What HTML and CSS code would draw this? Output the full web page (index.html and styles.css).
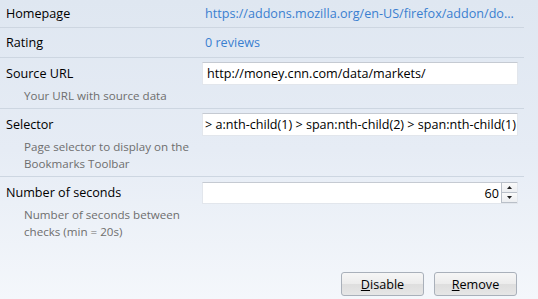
FILE: index.html
```html
<!DOCTYPE html>
<html lang="en">
<head>
  <meta charset="UTF-8">
  <title>Add-on preferences</title>
  <link rel="stylesheet" href="styles.css">
</head>
<body>

<div id="prefs">
  <div class="row row-info first">
    <div class="label">Homepage</div>
    <div class="value"><a class="link" href="#">https://addons.mozilla.org/en-US/firefox/addon/do...</a></div>
  </div>

  <div class="row row-info second">
    <div class="label">Rating</div>
    <div class="value"><a class="link" href="#">0 reviews</a></div>
  </div>

  <div class="row setting">
    <div class="label-box">
      <div class="label">Source URL</div>
      <div class="desc">Your URL with source data</div>
    </div>
    <div class="field"><div class="textbox"><span>http://money.cnn.com/data/markets/</span></div></div>
  </div>

  <div class="row setting">
    <div class="label-box">
      <div class="label">Selector</div>
      <div class="desc">Page selector to display on the<br>Bookmarks Toolbar</div>
    </div>
    <div class="field"><div class="textbox scrolled"><span>&gt; a:nth-child(1) &gt; span:nth-child(2) &gt; span:nth-child(1)</span></div></div>
  </div>

  <div class="row setting last">
    <div class="label-box">
      <div class="label">Number of seconds</div>
      <div class="desc">Number of seconds between<br>checks (min = 20s)</div>
    </div>
    <div class="field">
      <div class="numbox">
        <span class="num">60</span>
        <div class="spin">
          <div class="spin-btn"><svg width="5" height="3" viewBox="0 0 5 3"><path d="M2.5 0 L5 3 L0 3 Z" fill="#222"/></svg></div>
          <div class="spin-btn"><svg width="5" height="3" viewBox="0 0 5 3"><path d="M0 0 L5 0 L2.5 3 Z" fill="#222"/></svg></div>
        </div>
      </div>
    </div>
  </div>
</div>

<div id="buttons">
  <button class="btn"><u>D</u>isable</button>
  <button class="btn"><u>R</u>emove</button>
</div>

</body>
</html>
```

FILE: styles.css
```css
* {
  box-sizing: border-box;
  margin: 0;
  padding: 0;
}

html, body {
  height: 100%;
}

body {
  background: linear-gradient(to bottom, #dfe7f1 0%, #e6ecf5 50%, #f4f7fb 100%);
  font-family: 'Open Sans', 'DejaVu Sans', sans-serif;
  font-size: 12.6px;
  color: #000;
  overflow: hidden;
}

#prefs {
  width: 524px;
}

.row {
  display: grid;
  grid-template-columns: 202px 316px;
  border-bottom: 1px solid #cdd6e1;
}

.row.last {
  border-bottom: none;
  height: 85px;
}

.row-info {
  align-items: center;
}

.row-info.first {
  height: 28px;
}

.row-info.second {
  height: 30px;
}

.label {
  padding-left: 6px;
  line-height: 17px;
}

.value {
  padding-left: 3px;
}

.link {
  color: #3a7fd0;
  text-decoration: none;
  white-space: nowrap;
}

.setting {
  padding-top: 4px;
}

.label-box {
  padding-top: 3px;
}

.desc {
  color: #6e6e6e;
  font-size: 11.6px;
  padding-left: 24px;
  margin-top: 5px;
  line-height: 17px;
  white-space: nowrap;
}

.setting:nth-child(3) {
  height: 51px;
}

.setting:nth-child(4) {
  height: 68px;
}

.textbox {
  height: 23px;
  background: #fff;
  border: 1px solid #e2e6ec;
  border-top-color: #c5cad2;
  display: flex;
  align-items: center;
  overflow: hidden;
  white-space: nowrap;
  padding: 0 4px;
}

.textbox.scrolled {
  justify-content: flex-end;
  padding-right: 1px;
}

.textbox span {
  flex: none;
}

.numbox {
  margin-top: 1px;
  height: 22px;
  background: #fff;
  border: 1px solid #e2e6ec;
  border-top-color: #c5cad2;
  display: flex;
  align-items: center;
  justify-content: flex-end;
}

.num {
  padding-right: 2px;
}

.spin {
  width: 16px;
  height: 21px;
  margin-top: -1px;
  display: flex;
  flex-direction: column;
  border: 1px solid #b9bfc8;
  border-right: none;
}

.spin-btn {
  flex: 1;
  display: flex;
  align-items: center;
  justify-content: center;
  background: linear-gradient(to bottom, #fafafa, #eceef1);
}

.spin-btn + .spin-btn {
  border-top: 1px solid #b9bfc8;
}

#buttons {
  display: flex;
  gap: 10px;
  justify-content: flex-end;
  padding-right: 21px;
  margin-top: 10px;
}

.btn {
  width: 83px;
  height: 24px;
  font-family: 'Open Sans', 'DejaVu Sans', sans-serif;
  font-size: 12.6px;
  color: #000;
  border: 1px solid #a9b0ba;
  border-radius: 3px;
  background: linear-gradient(to bottom, #f6f6f6 0%, #ececec 50%, #dedede 51%, #e6e6e6 100%);
}

.btn u {
  text-decoration-thickness: 1px;
}
```
